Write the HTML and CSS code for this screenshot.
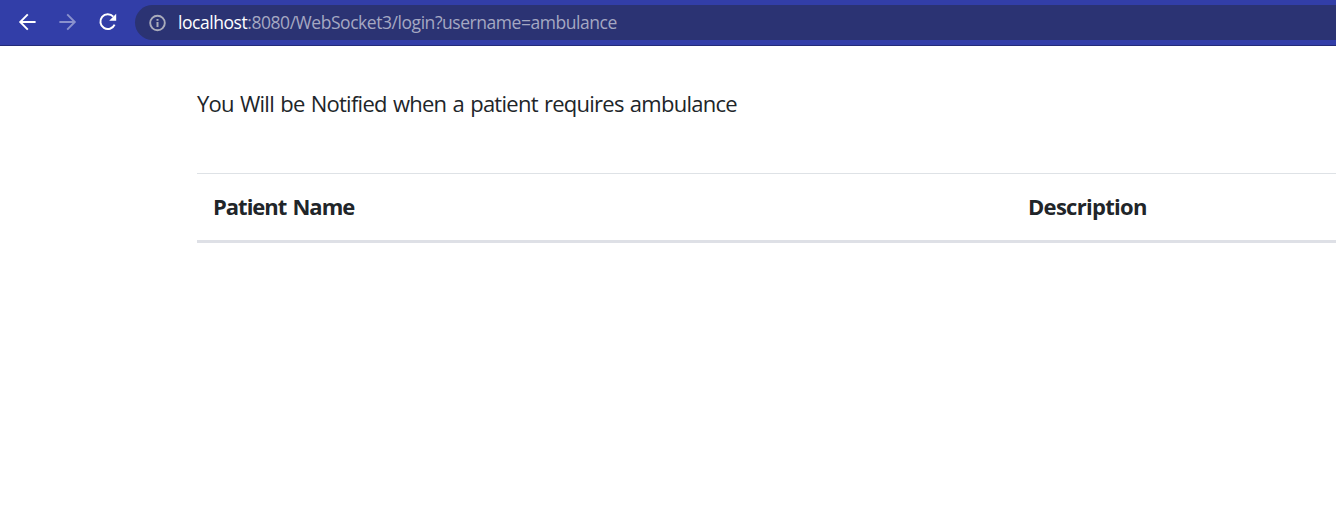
FILE: index.html
```html
<!DOCTYPE html>
<html lang="en">
<head>
<meta charset="utf-8">
<title>Ambulance</title>
<link rel="stylesheet" href="styles.css">
</head>
<body>
<header class="toolbar">
  <svg class="nav-icon" viewBox="0 0 20 20"><path d="M18.6 10H3.6M10.8 2.4L3.2 10L10.8 17.6" fill="none" stroke="#fff" stroke-width="1.9"/></svg>
  <svg class="nav-icon nav-disabled" viewBox="0 0 20 20"><path d="M2.4 10H17.4M10.2 2.4L17.8 10L10.2 17.6" fill="none" stroke="#fff" stroke-width="1.9"/></svg>
  <svg class="nav-icon" viewBox="0 0 20 20"><path d="M16.3 4.7A7.4 7.4 0 1 0 17.6 12.6" fill="none" stroke="#fff" stroke-width="2"/><path d="M19.2 1.8V8.8H12.2z" fill="#fff"/></svg>
  <div class="address">
    <svg class="info-icon" viewBox="0 0 18 18"><circle cx="9.5" cy="9" r="7.3" fill="none" stroke="#aaacbb" stroke-width="1.9"/><path d="M9.5 8v5M9.5 4.9v1.9" stroke="#aaacbb" stroke-width="2"/></svg>
    <span class="url"><span class="host">localhost</span><span class="path">:8080/WebSocket3/login?username=ambulance</span></span>
  </div>
</header>
<main class="container">
  <p class="notice"><span class="notice-text">You Will be Notified when a patient requires ambulance</span></p>
  <table class="table">
    <thead><tr><th class="col-name"><span class="name-text">Patient Name</span></th><th><span class="desc-text">Description</span></th></tr></thead>
  </table>
</main>
</body>
</html>
```
FILE: styles.css
```css
* { box-sizing: border-box; }
body {
  margin: 0;
  background: #fff;
  color: #212529;
  font-family: "Open Sans", "Noto Sans", sans-serif;
}
.toolbar {
  display: flex;
  align-items: center;
  height: 46px;
  padding: 0 0 1px 17px;
  background: #323ea8;
  border-bottom: 1px solid #232b78;
}
.nav-icon { width: 20px; height: 20px; margin-right: 20px; flex: none; }
.nav-disabled { opacity: .43; }
.address {
  display: flex;
  align-items: center;
  flex: 1;
  height: 35px;
  margin-top: 1px;
  margin-left: -2px;
  padding-left: 13px;
  border-radius: 18px 0 0 18px;
  background: #2b3373;
}
.info-icon { width: 18px; height: 18px; margin-right: 12px; flex: none; }
.url { font-size: 17.5px; line-height: 35px; white-space: nowrap; }
.host { color: #fff; letter-spacing: -.45px; }
.path { color: #a5a8c2; letter-spacing: -.45px; }
.container { padding-left: 197px; }
.notice {
  margin: 0;
  padding-top: 39px;
  height: 127px;
  font-size: 22px;
  line-height: 36px;
  white-space: nowrap;
}
.notice-text { letter-spacing: -.74px; word-spacing: 1.2px; }
.table { width: 100%; table-layout: fixed; border-collapse: separate; border-spacing: 0; }
.table th {
  height: 70px;
  padding: 0 16px 3px;
  border-top: 1px solid #dee2e6;
  border-bottom: 3px solid #dee0e6;
  font-size: 22px;
  line-height: 36px;
  text-align: left;
}
.col-name { width: 815px; }
.name-text { letter-spacing: -1px; word-spacing: 1.4px; }
.desc-text { letter-spacing: -.7px; }
```
